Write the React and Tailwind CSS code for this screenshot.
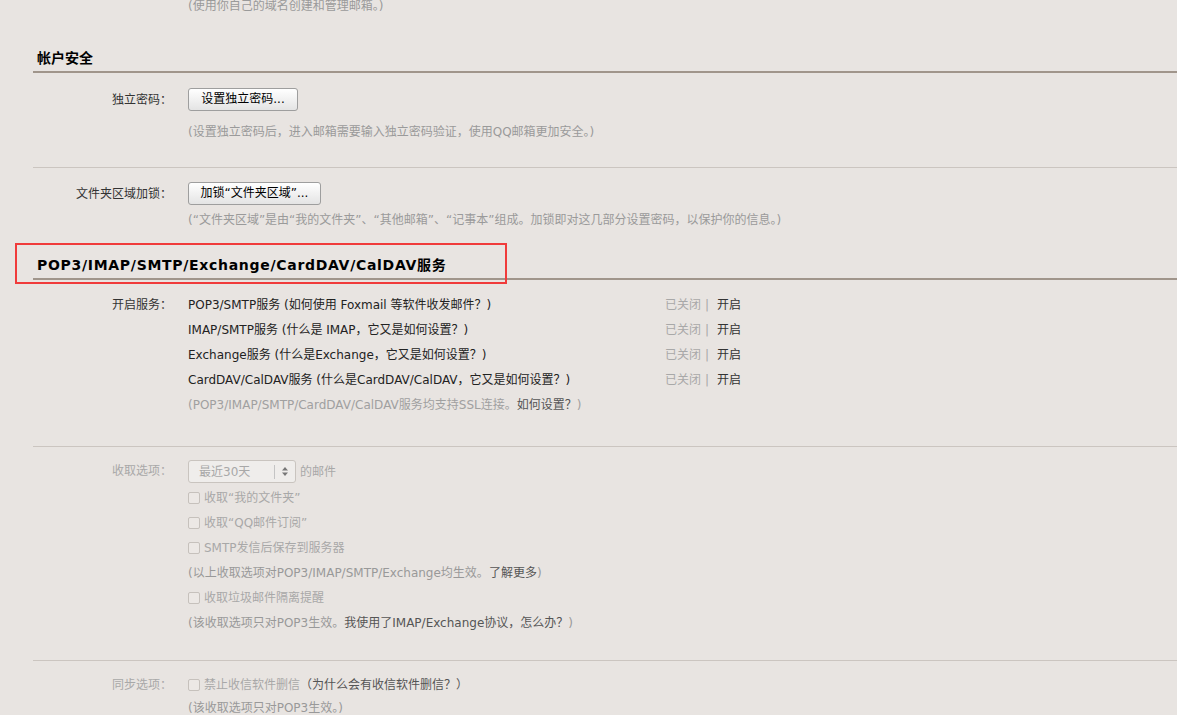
import React from "react";

function Checkbox() {
  return (
    <span className="inline-block w-[12px] h-[12px] border border-[#c6c1bc] rounded-[2px] bg-[#ece8e5] mr-[4px] align-[-2px]" />
  );
}

function Btn({ children, w }) {
  return (
    <div
      className={`${w} h-[23px] flex items-center justify-center border border-[#9e9e9e] rounded-[3px] bg-linear-to-b from-white to-[#e4e4e4] text-black leading-[21px]`}
    >
      {children}
    </div>
  );
}

function ServiceRow({ children }) {
  return (
    <div className="flex leading-[25px]">
      <div className="w-[477px] text-[#222] whitespace-nowrap">{children}</div>
      <div className="whitespace-nowrap">
        <span className="text-[#a8a8a8]">已关闭</span>
        <span className="text-[#a8a8a8] ml-[4px]">|</span>
        <span className="text-[#333] ml-[8px]">开启</span>
      </div>
    </div>
  );
}

export default function App() {
  return (
    <div className="relative h-[715px] overflow-hidden bg-[#e8e4e1] text-[12px] text-[#333] font-['DejaVu_Sans','Noto_Sans_CJK_SC',sans-serif]">
      <div className="pl-[33px]">
        <div className="pl-[155px] leading-[12px] text-[#9a9a9a]">(使用你自己的域名创建和管理邮箱。)</div>

        <div className="mt-[34px] border-b-2 border-[#a0958b] pl-[4px] pb-[1px] text-[14px] font-bold leading-[24px] text-black">
          帐户安全
        </div>

        <div className="flex items-center pt-[15px]">
          <div className="w-[139px] text-right">独立密码：</div>
          <div className="ml-[16px]">
            <Btn w="w-[110px]">设置独立密码...</Btn>
          </div>
        </div>
        <div className="ml-[155px] mt-[11px] leading-[20px] text-[#9a9a9a]">
          (设置独立密码后，进入邮箱需要输入独立密码验证，使用QQ邮箱更加安全。)
        </div>

        <div className="mt-[25px] border-t border-[#cbc5c0]" />

        <div className="flex items-center pt-[14px]">
          <div className="w-[139px] text-right">文件夹区域加锁：</div>
          <div className="ml-[16px]">
            <Btn w="w-[133px]">加锁“文件夹区域”...</Btn>
          </div>
        </div>
        <div className="ml-[155px] mt-[5px] leading-[20px] text-[#9a9a9a]">
          (“文件夹区域”是由“我的文件夹”、“其他邮箱”、“记事本”组成。加锁即对这几部分设置密码，以保护你的信息。)
        </div>

        <div className="mt-[23px] border-b-2 border-[#a0958b] pl-[4px] pb-[1px] text-[14px] font-bold leading-[24px] tracking-[0.7px] text-black">
          POP3/IMAP/SMTP/Exchange/CardDAV/CalDAV服务
        </div>

        <div className="flex mt-[13px]">
          <div className="w-[139px] text-right leading-[25px]">开启服务：</div>
          <div className="ml-[16px] flex-1">
            <ServiceRow>POP3/SMTP服务 (如何使用 Foxmail 等软件收发邮件？)</ServiceRow>
            <ServiceRow>IMAP/SMTP服务 (什么是 IMAP，它又是如何设置？)</ServiceRow>
            <ServiceRow>Exchange服务 (什么是Exchange，它又是如何设置？)</ServiceRow>
            <ServiceRow>CardDAV/CalDAV服务 (什么是CardDAV/CalDAV，它又是如何设置？)</ServiceRow>
            <div className="leading-[25px] text-[#a0a0a0] whitespace-nowrap">
              (POP3/IMAP/SMTP/CardDAV/CalDAV服务均支持SSL连接。<span className="text-[#555]">如何设置？</span>)
            </div>
          </div>
        </div>

        <div className="mt-[28px] border-t border-[#cbc5c0]" />

        <div className="flex pt-[13px]">
          <div className="w-[139px] text-right leading-[23px] text-[#a8a8a8]">收取选项：</div>
          <div className="ml-[16px] flex-1">
            <div className="flex items-center h-[23px]">
              <div className="w-[108px] h-[23px] flex items-center border border-[#c9c4bf] rounded-[3px] bg-[#efedeb]">
                <span className="w-[85px] pl-[10px] text-[#a8a8a8]">最近30天</span>
                <span className="w-px h-[14px] bg-[#c4c4c4]" />
                <svg className="ml-[7px]" width="6" height="9" viewBox="0 0 6 9">
                  <path d="M3 0 L6 3.5 L0 3.5 Z" fill="#777" />
                  <path d="M0 5.5 L6 5.5 L3 9 Z" fill="#777" />
                </svg>
              </div>
              <span className="ml-[4px] text-[#a8a8a8]">的邮件</span>
            </div>
            <div className="mt-[3px] leading-[25px] text-[#a8a8a8]">
              <div><Checkbox />收取“我的文件夹”</div>
              <div><Checkbox />收取“QQ邮件订阅”</div>
              <div><Checkbox />SMTP发信后保存到服务器</div>
              <div className="text-[#999]">
                (以上收取选项对POP3/IMAP/SMTP/Exchange均生效。<span className="text-[#555]">了解更多</span>)
              </div>
              <div><Checkbox />收取垃圾邮件隔离提醒</div>
              <div className="text-[#999]">
                (该收取选项只对POP3生效。<span className="text-[#555]">我使用了IMAP/Exchange协议，怎么办？</span>)
              </div>
            </div>
          </div>
        </div>

        <div className="mt-[24px] border-t border-[#cbc5c0]" />

        <div className="flex pt-[12px]">
          <div className="w-[139px] text-right leading-[24px] text-[#a8a8a8]">同步选项：</div>
          <div className="ml-[16px] flex-1">
            <div className="leading-[24px] text-[#a8a8a8]">
              <Checkbox />禁止收信软件删信<span className="text-[#555]">（为什么会有收信软件删信？）</span>
            </div>
            <div className="leading-[23px] text-[#999]">(该收取选项只对POP3生效。)</div>
          </div>
        </div>
      </div>

      <div className="absolute left-[15px] top-[243px] w-[492px] h-[41px] border-2 border-[#f03b3b]" />
    </div>
  );
}
